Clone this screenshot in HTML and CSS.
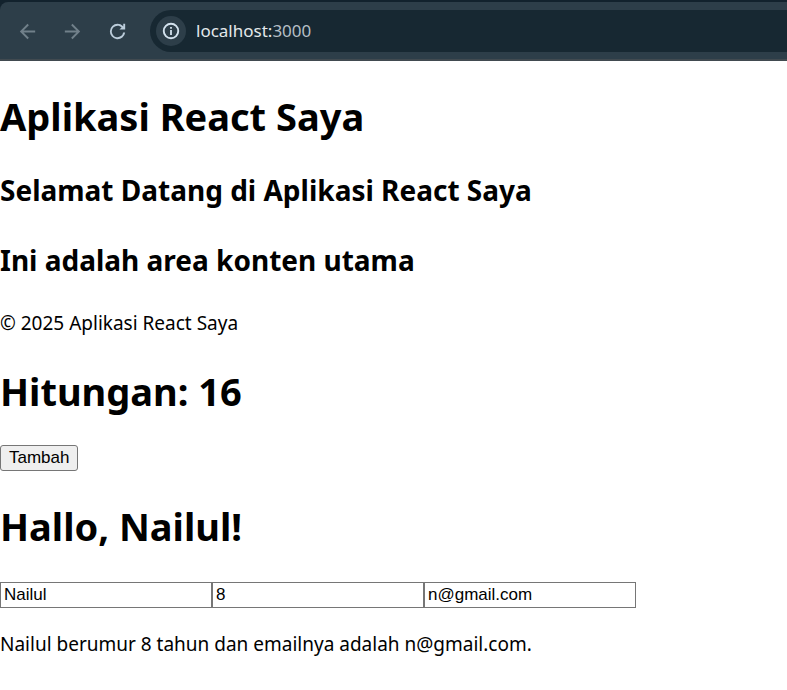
FILE: index.html
```html
<!DOCTYPE html>
<html lang="id">
<head>
<meta charset="utf-8">
<title>Aplikasi React Saya</title>
<link rel="stylesheet" href="styles.css">
</head>
<body>
<div class="frame">
<nav class="toolbar" aria-label="Browser">
  <button class="nav-btn dim" aria-label="Kembali"><svg viewBox="0 0 24 24"><path d="M20 11H7.830l5.590-5.590L12 4l-8 8 8 8 1.410-1.410L7.830 13H20v-2z"/></svg></button>
  <button class="nav-btn dim" aria-label="Maju"><svg viewBox="0 0 24 24"><path d="M12 4l-1.410 1.410L16.170 11H4v2h12.170l-5.580 5.590L12 20l8-8z"/></svg></button>
  <button class="nav-btn reload" aria-label="Muat ulang"><svg viewBox="0 0 24 24"><path d="M17.650 6.350A7.960 7.960 0 0 0 12 4a8 8 0 1 0 8 9h-2.100A6 6 0 1 1 12 6c1.660 0 3.140.69 4.220 1.780L14 10h6V4h-2v2.700z"/></svg></button>
  <div class="address">
    <button class="info" aria-label="Info situs"><svg viewBox="0 0 22 22"><path fill-rule="evenodd" d="M11 2.800a8.200 8.200 0 1 0 0 16.400 8.200 8.200 0 0 0 0-16.400zM11 4.700a6.300 6.300 0 1 1 0 12.600 6.300 6.300 0 0 1 0-12.600zM10.100 10h1.800v5h-1.800zM10.100 7h1.800v1.800h-1.800z"/></svg></button>
    <span class="url">localhost:<span class="port">3000</span></span>
  </div>
</nav>
</div>
<main>
  <h1>Aplikasi React Saya</h1>
  <h2>Selamat Datang di Aplikasi React Saya</h2>
  <h2>Ini adalah area konten utama</h2>
  <p>© 2025 Aplikasi React Saya</p>
  <h1>Hitungan: 16</h1>
  <button class="add">Tambah</button>
  <h1>Hallo, Nailul!</h1>
  <form class="fields">
    <input type="text" value="Nailul" aria-label="Nama">
    <input type="text" value="8" aria-label="Umur">
    <input type="text" value="n@gmail.com" aria-label="Email">
  </form>
  <p>Nailul berumur 8 tahun dan emailnya adalah n@gmail.com.</p>
</main>
</body>
</html>
```
FILE: styles.css
```css
* { box-sizing: border-box; }
body { margin: 0; background: #fff; color: #000; font: 19px/26px "Segoe UI", "Noto Sans", sans-serif; }
.frame { padding-top: 2px; background: #12222d; }
.toolbar { display: flex; align-items: center; padding: 8px 0 7px 16px; background: #2d3e49; border-bottom: 2px solid #414a50; border-top-left-radius: 8px; }
.nav-btn, .info { border: 0; padding: 0; background: none; }
.nav-btn { width: 23px; height: 23px; margin-right: 22px; color: #71808a; }
.reload { color: #bccddb; margin-right: 21px; }
svg { display: block; width: 100%; height: 100%; fill: currentColor; }
.address { display: flex; align-items: center; flex: 1; height: 42px; padding-left: 6px; border-radius: 21px 0 0 21px; background: #172832; }
.info { width: 30px; height: 30px; padding: 4px; border-radius: 50%; background: #2d3e49; color: #d3e2ee; }
.url { margin-left: 10px; font-size: 17px; color: #e3e8eb; }
.port { color: #b5bfc5; }
h1 { margin: 28px 0 27px; font-size: 38px; line-height: 54px; }
h2 { margin: 0 0 30px; font-size: 28px; line-height: 40px; }
p { margin: 23px 0; }
.add { display: block; height: 26px; padding: 0 8px; border: 1px solid #767676; border-radius: 3px; background: #efefef; color: #000; font: 17px "Liberation Sans", sans-serif; }
.fields { display: flex; margin-top: 29px; }
.fields input { flex: 0 1 212px; min-width: 0; height: 26px; padding: 1px 3px; border: 1px solid #767676; font: 17px "Liberation Sans", sans-serif; }
```
